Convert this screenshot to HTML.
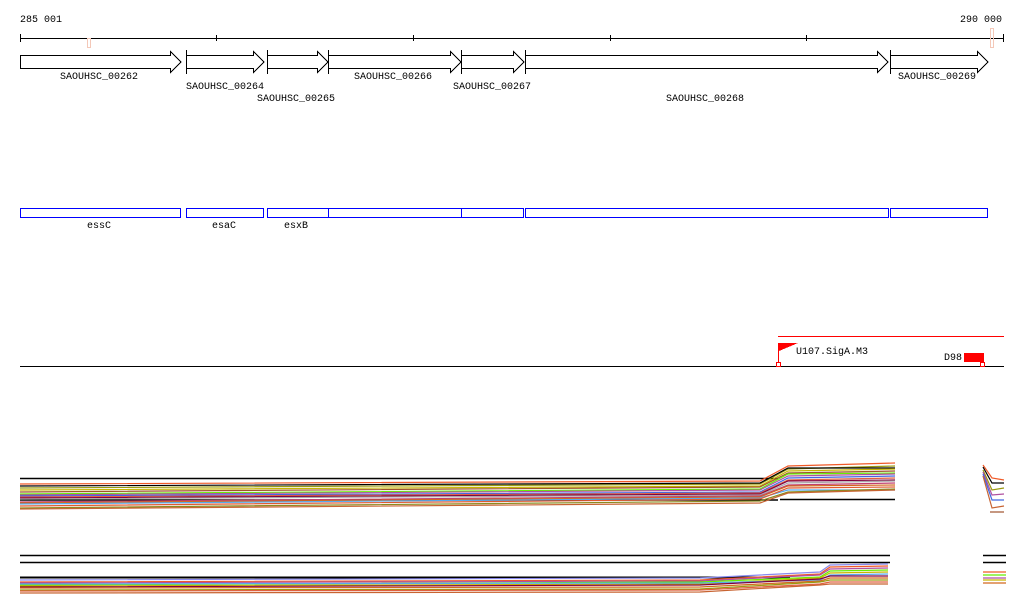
<!DOCTYPE html>
<html><head><meta charset="utf-8"><style>
html,body{margin:0;padding:0;background:#fff;width:1024px;height:611px;overflow:hidden}
svg text{font-family:"Liberation Mono","DejaVu Sans Mono",monospace;font-size:10px;fill:#000}
</style></head><body>
<svg width="1024" height="611" viewBox="0 0 1024 611" xmlns="http://www.w3.org/2000/svg" shape-rendering="crispEdges">
<text x="20" y="22">285 001</text>
<text x="1002" y="22" text-anchor="end">290 000</text>
<line x1="20" y1="38.5" x2="1004" y2="38.5" stroke="#000"/>
<g stroke="#000"><line x1="20.5" y1="34" x2="20.5" y2="42"/><line x1="216.5" y1="35" x2="216.5" y2="41"/><line x1="413.5" y1="35" x2="413.5" y2="41"/><line x1="610.5" y1="35" x2="610.5" y2="41"/><line x1="806.5" y1="35" x2="806.5" y2="41"/><line x1="1003.5" y1="34" x2="1003.5" y2="42"/></g>
<rect x="87.5" y="38.5" width="3" height="9" fill="none" stroke="#f4c8b8"/>
<rect x="990.5" y="28.5" width="3" height="19" fill="none" stroke="#f4c8b8"/>
<g fill="#fff" stroke="#000">
<path d="M20.5 55.5H170.5V51.5L181 62L170.5 72.5V68.5H20.5Z"/>
<path d="M186.5 55.5H253.5V51.5L264 62L253.5 72.5V68.5H186.5Z"/>
<path d="M267.5 55.5H317.5V51.5L328 62L317.5 72.5V68.5H267.5Z"/>
<path d="M328.5 55.5H450.5V51.5L461 62L450.5 72.5V68.5H328.5Z"/>
<path d="M461.5 55.5H513.5V51.5L524 62L513.5 72.5V68.5H461.5Z"/>
<path d="M525.5 55.5H877.5V51.5L888 62L877.5 72.5V68.5H525.5Z"/>
<path d="M890.5 55.5H977.5V51.5L988 62L977.5 72.5V68.5H890.5Z"/>
</g>
<g stroke="#000"><line x1="186.5" y1="50" x2="186.5" y2="74"/><line x1="328.5" y1="50" x2="328.5" y2="74"/><line x1="267.5" y1="50" x2="267.5" y2="74"/><line x1="461.5" y1="50" x2="461.5" y2="74"/><line x1="525.5" y1="50" x2="525.5" y2="74"/><line x1="890.5" y1="50" x2="890.5" y2="74"/></g>
<text x="99" y="79" text-anchor="middle">SAOUHSC_00262</text>
<text x="186" y="89">SAOUHSC_00264</text>
<text x="257" y="101">SAOUHSC_00265</text>
<text x="393" y="79" text-anchor="middle">SAOUHSC_00266</text>
<text x="453" y="89">SAOUHSC_00267</text>
<text x="705" y="101" text-anchor="middle">SAOUHSC_00268</text>
<text x="898" y="79">SAOUHSC_00269</text>
<g fill="none" stroke="#0000ff">
<rect x="20.5" y="208.5" width="160" height="9"/><rect x="186.5" y="208.5" width="77" height="9"/><rect x="267.5" y="208.5" width="61" height="9"/><rect x="328.5" y="208.5" width="133" height="9"/><rect x="461.5" y="208.5" width="62" height="9"/><rect x="525.5" y="208.5" width="363" height="9"/><rect x="890.5" y="208.5" width="97" height="9"/>
</g>
<text x="99" y="228" text-anchor="middle">essC</text>
<text x="224" y="228" text-anchor="middle">esaC</text>
<text x="296" y="228" text-anchor="middle">esxB</text>
<line x1="778" y1="336.5" x2="1004" y2="336.5" stroke="#f00"/>
<line x1="20" y1="366.5" x2="1004" y2="366.5" stroke="#000"/>
<line x1="778.5" y1="343" x2="778.5" y2="366" stroke="#f00"/>
<path d="M779 343H798L779 351Z" fill="#f00"/>
<rect x="776.5" y="362.5" width="4" height="4" fill="#fff" stroke="#f00"/>
<text x="796" y="354">U107.SigA.M3</text>
<text x="944" y="360">D98</text>
<rect x="964" y="353" width="20" height="9" fill="#f00"/>
<rect x="980.5" y="362.5" width="4" height="4" fill="#fff" stroke="#f00"/>
<g fill="none" stroke-width="1.2" shape-rendering="auto">
<polyline stroke="#000" stroke-width="1.5" points="20,478.5 778,478.5"/>
<polyline stroke="#000" stroke-width="1.5" points="780,499.5 895,499.5"/>
<polyline stroke="#000" stroke-width="1.5" points="20,500 778,500"/>
<polyline stroke="#f05a28" points="20,484 760,481 788,466 895,463"/>
<polyline stroke="#9a9a10" points="20,488 760,484 788,469 895,466"/>
<polyline stroke="#000" points="20,486 760,483 788,468 895,468"/>
<polyline stroke="#c8b400" points="20,490 760,486 788,471 895,469"/>
<polyline stroke="#a0522d" points="20,492 760,487 788,473 895,471"/>
<polyline stroke="#66ee00" points="20,494 760,489 788,474 895,473"/>
<polyline stroke="#b050a0" points="20,495 760,490 788,476 895,474"/>
<polyline stroke="#4169e1" points="20,496 760,492 788,478 895,476"/>
<polyline stroke="#e06040" points="20,497 760,493 788,480 895,478"/>
<polyline stroke="#800040" points="20,498 760,494 788,481 895,480"/>
<polyline stroke="#aaaaaa" points="20,499 760,495 788,483 895,481"/>
<polyline stroke="#c04070" points="20,502 760,496 788,485 895,483"/>
<polyline stroke="#d2691e" points="20,503 760,497 788,486 895,485"/>
<polyline stroke="#55aaee" points="20,504 760,498 788,490 895,490"/>
<polyline stroke="#e05a30" points="20,506 760,499 788,488 895,487"/>
<polyline stroke="#8b8b20" points="20,508 760,501 788,492 895,489"/>
<polyline stroke="#c86432" points="20,509 760,503 788,493 895,490"/>
<polyline stroke="#f05a28" points="983,465 992,478 1004,480"/>
<polyline stroke="#000" points="983,467 992,483 1004,483"/>
<polyline stroke="#9a9a10" points="983,470 992,490 1004,488"/>
<polyline stroke="#b050a0" points="983,472 992,495 1004,494"/>
<polyline stroke="#4169e1" points="983,474 992,500 1004,500"/>
<polyline stroke="#c86432" points="983,476 992,508 1004,506"/>
<polyline stroke="#a0522d" points="990,512 1004,512"/>
</g>
<g fill="none" stroke-width="1.2" shape-rendering="auto">
<polyline stroke="#000" stroke-width="1.5" points="20,555.5 890,555.5"/>
<polyline stroke="#000" stroke-width="1.5" points="20,562.5 890,562.5"/>
<polyline stroke="#000" stroke-width="1.5" points="983,555.5 1006,555.5"/>
<polyline stroke="#000" stroke-width="1.5" points="983,562.5 1006,562.5"/>
<polyline stroke="#000" stroke-width="2" points="20,577.5 790,577.5"/>
<polyline stroke="#8888ee" points="20,580 700,578 820,572 830,565 888,564"/>
<polyline stroke="#f05a28" points="20,582 700,580 820,574 830,567 888,566"/>
<polyline stroke="#b050a0" points="20,583 700,581 820,575 830,569 888,568"/>
<polyline stroke="#66ee00" points="20,585 700,582 820,577 830,571 888,570"/>
<polyline stroke="#c8b400" points="20,586 700,584 820,578 830,573 888,572"/>
<polyline stroke="#55aaee" points="20,584 700,583 820,580 830,575 888,574"/>
<polyline stroke="#800040" points="20,587 700,585 820,579 830,576 888,576"/>
<polyline stroke="#d2691e" points="20,588 700,587 820,581 830,578 888,578"/>
<polyline stroke="#9a9a10" points="20,590 700,589 820,582 830,580 888,580"/>
<polyline stroke="#e06040" points="20,591 700,590 820,584 830,582 888,582"/>
<polyline stroke="#c86432" points="20,593 700,592 820,585 830,584 888,584"/>
<polyline stroke="#f05a28" points="983,572 1006,572"/>
<polyline stroke="#66ee00" points="983,575 1006,575"/>
<polyline stroke="#b050a0" points="983,578 1006,578"/>
<polyline stroke="#c8b400" points="983,580 1006,580"/>
<polyline stroke="#d2691e" points="983,583 1006,583"/>
</g>
</svg>
</body></html>
